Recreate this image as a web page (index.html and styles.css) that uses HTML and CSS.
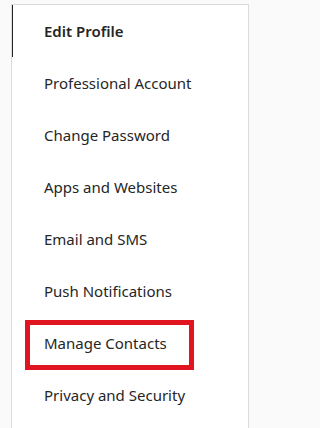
FILE: index.html
```html
<!DOCTYPE html>
<html>
<head>
<meta charset="utf-8">
<link rel="stylesheet" href="styles.css">
</head>
<body>
<nav class="panel">
  <ul class="menu">
    <li class="item active">Edit Profile</li>
    <li class="item">Professional Account</li>
    <li class="item">Change Password</li>
    <li class="item">Apps and Websites</li>
    <li class="item">Email and SMS</li>
    <li class="item">Push Notifications</li>
    <li class="item highlighted">Manage Contacts<span class="mark"></span></li>
    <li class="item">Privacy and Security</li>
  </ul>
</nav>
</body>
</html>
```
FILE: styles.css
```css
html, body {
  margin: 0;
  padding: 0;
  background: #fafafa;
  height: 100%;
  overflow: hidden;
}
body {
  padding: 4px 0 0 11px;
  box-sizing: border-box;
  font-family: "Noto Sans", "Open Sans", sans-serif;
  color: #262626;
}
.panel {
  width: 238px;
  height: 100%;
  background: #fff;
  border-top: 1px solid #dbdbdb;
  border-left: 1px solid #dbdbdb;
  border-right: 1px solid #dbdbdb;
  box-sizing: border-box;
  overflow: hidden;
}
.menu {
  list-style: none;
  margin: 0 0 0 -1px;
  padding: 0;
}
.item {
  position: relative;
  height: 52px;
  display: flex;
  align-items: center;
  padding-left: 31px;
  border-left: 2px solid transparent;
  font-size: 15px;
  line-height: 18px;
  box-sizing: border-box;
}
.active {
  border-left-color: #262626;
  font-weight: 600;
}
.mark {
  position: absolute;
  left: 12px;
  top: 3px;
  width: 169px;
  height: 50px;
  border: 5px solid #e0151f;
  box-sizing: border-box;
}
```
